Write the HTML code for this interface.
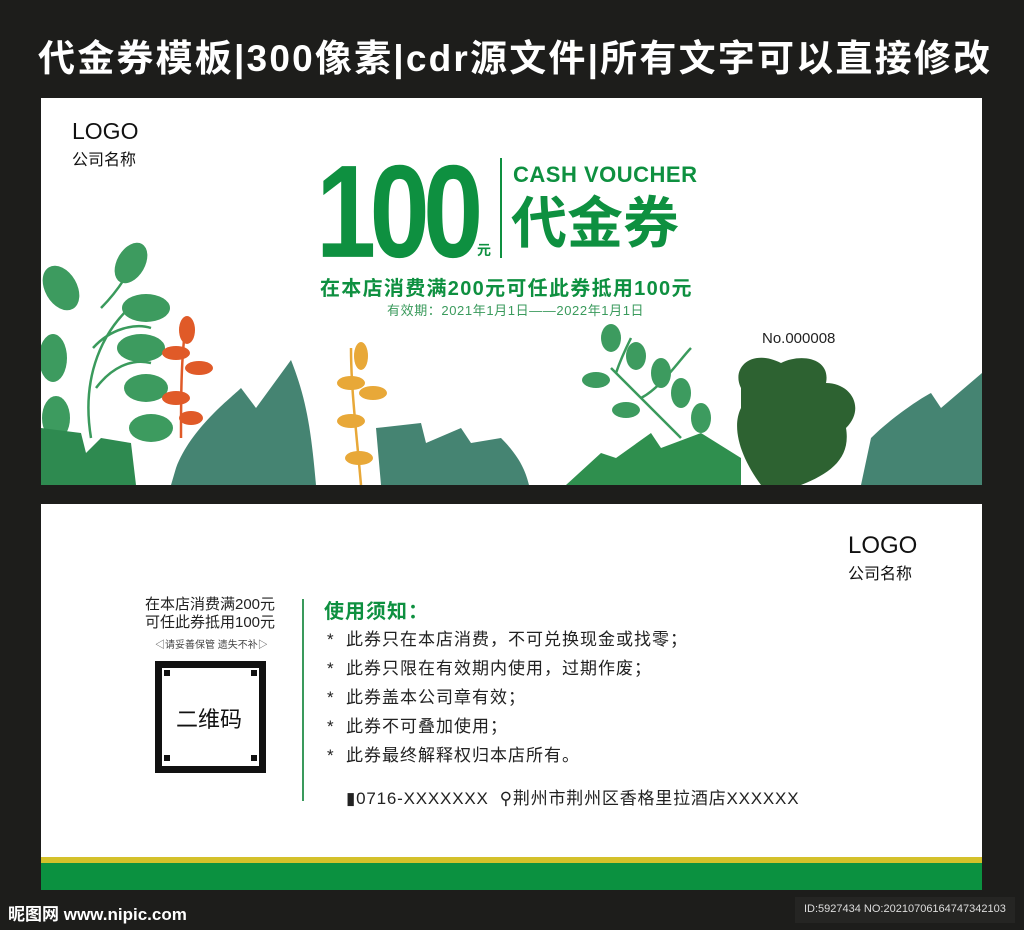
<!DOCTYPE html>
<html><head><meta charset="utf-8"><style>
*{margin:0;padding:0;box-sizing:border-box}
body{width:1024px;height:930px;background:#1d1d1b;position:relative;overflow:hidden;font-family:"Liberation Sans","Noto Sans CJK SC",sans-serif}
.a{position:absolute;white-space:nowrap}
.g{color:#0e9040}
</style></head><body>
<div class="a" style="left:38px;top:28px;font-size:37px;font-weight:bold;color:#fff;letter-spacing:2.2px">代金券模板|300像素|cdr源文件|所有文字可以直接修改</div>

<div class="a" style="left:41px;top:98px;width:941px;height:387px;background:#fff;overflow:hidden">
<svg width="941" height="387" style="position:absolute;left:0;top:0">
<g fill="none" stroke="#3a9a5c" stroke-width="2.5"><path d="M50 340 C40 280 60 230 100 200 M55 290 C70 270 90 260 110 265 M52 250 C70 230 95 225 110 230 M60 210 C80 190 90 170 95 160"/>
<path d="M320 387 C315 330 310 290 310 250" stroke="#e8a838"/><path d="M140 340 C140 300 140 260 145 225" stroke="#e05a28"/>
<path d="M640 340 C620 320 600 300 570 270 M600 300 C620 290 640 260 650 250 M575 275 C580 260 585 250 590 240"/></g>
<g fill="#3d9b5f"><ellipse cx="90" cy="165" rx="14" ry="22" transform="rotate(30 90 165)"/><ellipse cx="20" cy="190" rx="16" ry="24" transform="rotate(-30 20 190)"/><ellipse cx="105" cy="210" rx="24" ry="14"/><ellipse cx="100" cy="250" rx="24" ry="14"/><ellipse cx="105" cy="290" rx="22" ry="14"/><ellipse cx="110" cy="330" rx="22" ry="14"/><ellipse cx="12" cy="260" rx="14" ry="24"/><ellipse cx="15" cy="320" rx="14" ry="22"/>
<ellipse cx="570" cy="240" rx="10" ry="14"/><ellipse cx="595" cy="258" rx="10" ry="14"/><ellipse cx="620" cy="275" rx="10" ry="15"/><ellipse cx="640" cy="295" rx="10" ry="15"/><ellipse cx="660" cy="320" rx="10" ry="15"/><ellipse cx="555" cy="282" rx="14" ry="8"/><ellipse cx="585" cy="312" rx="14" ry="8"/></g>
<g fill="#e05a28"><ellipse cx="146" cy="232" rx="8" ry="14"/><ellipse cx="135" cy="255" rx="14" ry="7"/><ellipse cx="158" cy="270" rx="14" ry="7"/><ellipse cx="135" cy="300" rx="14" ry="7"/><ellipse cx="150" cy="320" rx="12" ry="7"/></g>
<g fill="#e8a838"><ellipse cx="320" cy="258" rx="7" ry="14"/><ellipse cx="310" cy="285" rx="14" ry="7"/><ellipse cx="332" cy="295" rx="14" ry="7"/><ellipse cx="310" cy="323" rx="14" ry="7"/><ellipse cx="318" cy="360" rx="14" ry="7"/></g>
<path fill="#2e8a50" d="M0 330 L40 335 L45 355 L60 340 L90 345 L95 387 L0 387Z"/>
<path fill="#458472" d="M135 370 C150 330 190 300 200 290 L215 310 L250 262 C265 300 270 330 275 387 L130 387Z"/>
<path fill="#458472" d="M335 330 L380 325 L385 345 L420 330 L430 345 L460 340 C480 360 485 375 488 387 L340 387Z"/>
<path fill="#2f8f4e" d="M525 387 L560 355 L575 360 L610 335 L620 350 L660 335 L700 360 L700 387Z"/>
<path fill="#2d6231" d="M700 290 C690 270 710 250 740 265 C760 255 790 260 785 285 C810 285 825 310 805 330 C810 360 790 375 760 387 L720 387 C700 360 690 330 700 310Z"/>
<path fill="#458472" d="M830 340 C850 320 880 300 890 295 L900 310 L941 275 L941 387 L820 387Z"/>
</svg>
<div class="a" style="left:31px;top:20px;font-size:23px;color:#111">LOGO</div>
<div class="a" style="left:31px;top:48px;font-size:16px;color:#111">公司名称</div>
<div class="a g" style="left:275px;top:48px;font-size:100px;font-weight:bold;line-height:100px;letter-spacing:-6px;transform:scale(1.08,1.32);transform-origin:left top">100</div>
<div class="a g" style="left:436px;top:142px;font-size:14px;font-weight:bold">元</div>
<div class="a" style="left:459px;top:60px;width:2px;height:100px;background:#0e9040"></div>
<div class="a g" style="left:472px;top:64px;font-size:22px;font-weight:bold;letter-spacing:0.5px">CASH VOUCHER</div>
<div class="a g" style="left:470px;top:96px;font-size:56px;line-height:60px;font-weight:bold">代金券</div>
<div class="a g" style="left:279px;top:174px;font-size:20px;font-weight:bold;letter-spacing:1.3px">在本店消费满200元可任此券抵用100元</div>
<div class="a" style="left:346px;top:202px;font-size:13px;color:#3a9a5c;letter-spacing:0.6px">有效期：2021年1月1日——2022年1月1日</div>
<div class="a" style="left:721px;top:232px;font-size:15px;color:#222">No.000008</div>
</div>

<div class="a" style="left:41px;top:504px;width:941px;height:386px;background:#fff">
<div class="a" style="left:807px;top:28px;font-size:24px;color:#111">LOGO</div>
<div class="a" style="left:807px;top:56px;font-size:16px;color:#111">公司名称</div>
<div class="a" style="left:104px;top:92px;font-size:15px;line-height:18px;color:#222;text-align:center">在本店消费满200元<br>可任此券抵用100元</div>
<div class="a" style="left:114px;top:132px;font-size:10px;color:#444">◁请妥善保管 遗失不补▷</div>
<div class="a" style="left:114px;top:157px;width:111px;height:112px;border:7px solid #111"></div>
<div class="a" style="left:123px;top:166px;width:6px;height:6px;background:#111"></div>
<div class="a" style="left:210px;top:166px;width:6px;height:6px;background:#111"></div>
<div class="a" style="left:123px;top:251px;width:6px;height:6px;background:#111"></div>
<div class="a" style="left:210px;top:251px;width:6px;height:6px;background:#111"></div>
<div class="a" style="left:135px;top:198px;font-size:22px;color:#111">二维码</div>
<div class="a" style="left:261px;top:95px;width:2px;height:202px;background:#3a9a5c"></div>
<div class="a g" style="left:283px;top:91px;font-size:20px;font-weight:bold;letter-spacing:1px">使用须知：</div>
<div class="a" style="left:286px;top:121px;font-size:17px;line-height:29px;color:#222;letter-spacing:1px">* &nbsp;此券只在本店消费，不可兑换现金或找零；<br>* &nbsp;此券只限在有效期内使用，过期作废；<br>* &nbsp;此券盖本公司章有效；<br>* &nbsp;此券不可叠加使用；<br>* &nbsp;此券最终解释权归本店所有。</div>
<div class="a" style="left:305px;top:280px;font-size:17px;color:#222;letter-spacing:0.8px">▮0716-XXXXXXX &nbsp;⚲荆州市荆州区香格里拉酒店XXXXXX</div>
<div class="a" style="left:0;top:353px;width:941px;height:6px;background:#d4c12a"></div>
<div class="a" style="left:0;top:359px;width:941px;height:27px;background:#0b9140"></div>
</div>

<div class="a" style="left:8px;top:900px;font-size:17px;font-weight:bold;color:#fff">昵图网 www.nipic.com</div>
<div class="a" style="left:795px;top:897px;width:220px;height:26px;background:#252523"></div>
<div class="a" style="left:804px;top:903px;font-size:11px;color:#ddd">ID:5927434 NO:20210706164747342103</div>
</body></html>
